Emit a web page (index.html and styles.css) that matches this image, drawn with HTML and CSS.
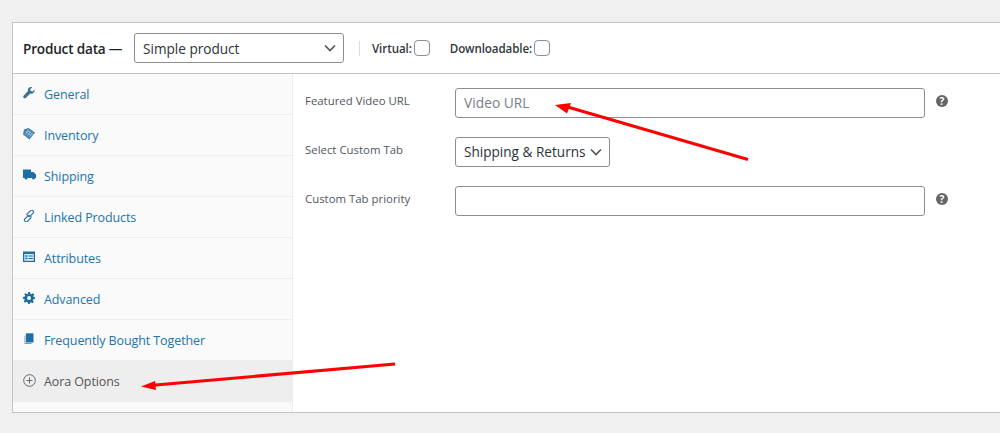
FILE: index.html
```html
<!DOCTYPE html>
<html>
<head>
<meta charset="utf-8">
<title>Product data</title>
<link rel="stylesheet" href="styles.css">
</head>
<body>
<div class="panel">
 <div class="head">
  <span class="head-title">Product data —</span>
  <div class="select type-select">
   <span>Simple product</span>
   <svg class="chev" width="12" height="8" viewBox="0 0 12 8"><path d="M1 1.500l5 5 5-5" fill="none" stroke="#50575e" stroke-width="1.700"/></svg>
  </div>
  <div class="head-sep"></div>
  <label class="check-label">Virtual:<span class="check"></span></label>
  <label class="check-label dl-label">Downloadable:<span class="check"></span></label>
 </div>
 <div class="body">
  <ul class="tabs">
   <li class="tab">
    <svg class="ico" viewBox="0 0 12 12"><path d="M11.600 2.600L9.600 4.600 7.700 4.100 7.200 2.200 9.200.3C7.800-.2 6.300.2 5.500 1.200 4.800 2 4.700 3.100 5 4.100L.6 8.800C.0 9.400.1 10.300.7 10.900 1.300 11.500 2.200 11.500 2.800 10.900L7.300 6.500C8.400 6.900 9.600 6.700 10.500 5.800 11.400 4.900 11.900 3.700 11.600 2.600Z" fill="#3c6f92"/></svg>
    <a>General</a>
   </li>
   <li class="tab">
    <svg class="ico" viewBox="0 0 12 12"><path d="M5.500 0L12 4.500 6.500 11.500 0 6.500 1 1.500Z" fill="#3c7fa8"/><path d="M2.500 3.500L8.500 8M4 2L10 6.500M5.500 1.500L2 7M7.500 3L4 8.500M9.500 4.500L6 9.500" stroke="#d5e4ee" stroke-width=".6" fill="none"/></svg>
    <a>Inventory</a>
   </li>
   <li class="tab">
    <svg class="ico truck" viewBox="0 0 13 12"><path d="M0 .5h8v2.500h2.500l2.500 2.500v3.500h-1a1.500 1.500 0 0 1-3 0H4.500a1.500 1.500 0 0 1-3 0H0Z" fill="#1e6fa5"/></svg>
    <a>Shipping</a>
   </li>
   <li class="tab">
    <svg class="ico" viewBox="0 0 12 12"><rect x="5.500" y="-.4" width="3.600" height="7.600" rx="1.800" transform="rotate(45 7.300 3.400)" fill="none" stroke="#3f7fae" stroke-width="1.200"/><rect x="2.900" y="4.800" width="3.600" height="7.600" rx="1.800" transform="rotate(45 4.700 8.600)" fill="none" stroke="#3f7fae" stroke-width="1.200"/></svg>
    <a>Linked Products</a>
   </li>
   <li class="tab">
    <svg class="ico" viewBox="0 0 12 12"><path d="M0 .5h12v10.500H0Z" fill="#1e6fa5"/><path d="M1.300 3h9.400v6.800H1.300Z" fill="#dfe9f1"/><path d="M2.300 4.200h2.200v1.500H2.300ZM2.300 6.800h2.200v1.500H2.300ZM5.500 4.500h4.300v1H5.500ZM5.500 7h4.300v1H5.500Z" fill="#1e6fa5"/></svg>
    <a>Attributes</a>
   </li>
   <li class="tab">
    <svg class="ico" viewBox="0 0 12 12"><path d="M5 0h2l.3 1.700 1.100.5L9.900 1.200l1.400 1.400-1 1.500.5 1.100L12 5v2l-1.700.3-.5 1.100 1 1.500-1.400 1.400-1.500-1-1.100.5L7 12H5l-.3-1.700-1.100-.5-1.500 1L.7 9.400l1-1.500-.5-1.100L0 7V5l1.700-.3.500-1.100-1-1.500L2.600 1.200l1.500 1 1.100-.5Z" fill="#1b6a9c"/><circle cx="6" cy="6" r="2" fill="#fafafa"/></svg>
    <a>Advanced</a>
   </li>
   <li class="tab">
    <svg class="ico" viewBox="0 0 12 12"><path d="M1.500 2.500h1v7.500h6v1h-7Z" fill="#6f9fc0"/><path d="M3 .3h7.500v9.200H3Z" fill="#1e6fa5"/></svg>
    <a>Frequently Bought Together</a>
   </li>
   <li class="tab tab-on">
    <svg class="ico plus" viewBox="0 0 13 13"><circle cx="6.500" cy="6.500" r="5.800" fill="none" stroke="#646970"/><path d="M6.500 3.500v6M3.500 6.500h6" stroke="#646970" fill="none"/></svg>
    <a>Aora Options</a>
   </li>
  </ul>
  <div class="fields">
   <div class="row">
    <label class="row-label">Featured Video URL</label>
    <input class="txt" type="text" placeholder="Video URL">
    <span class="help">?</span>
   </div>
   <div class="row">
    <label class="row-label">Select Custom Tab</label>
    <div class="select tab-select">
     <span>Shipping &amp; Returns</span>
     <svg class="chev" width="12" height="8" viewBox="0 0 12 8"><path d="M1 1.500l5 5 5-5" fill="none" stroke="#50575e" stroke-width="1.700"/></svg>
    </div>
   </div>
   <div class="row">
    <label class="row-label">Custom Tab priority</label>
    <input class="txt" type="text">
    <span class="help">?</span>
   </div>
  </div>
 </div>
</div>
<svg class="arrows" width="1000" height="433" viewBox="0 0 1000 433">
 <path d="M748 159.500L566 106.500" stroke="#f00" stroke-width="3" fill="none"/>
 <path d="M555 105L571 103 567 113.500Z" fill="#f00"/>
 <path d="M395 364L150 385.500" stroke="#f00" stroke-width="3" fill="none"/>
 <path d="M141 386.500L155 381 156 390Z" fill="#f00"/>
</svg>
</body>
</html>
```

FILE: styles.css
```css
body {
 margin: 0;
 height: 433px;
 overflow: hidden;
 background: #f0f0f1;
 font-family: "Open Sans", "Noto Sans", sans-serif;
 font-size: 13px;
 color: #3c434a;
}
.panel {
 margin: 22px 0 0 12px;
 height: 389px;
 background: #fff;
 border: 1px solid #c3c4c7;
 border-right: 0;
 display: flex;
 flex-direction: column;
}
.head {
 height: 50px;
 flex: none;
 display: flex;
 align-items: center;
 border-bottom: 1px solid #c3c4c7;
 padding-left: 10px;
}
.head-title {
 width: 111px;
 flex: none;
 font-size: 13.600px;
 font-weight: 600;
 color: #1d2327;
 letter-spacing: -0.2px;
}
.select {
 display: flex;
 align-items: center;
 justify-content: space-between;
 box-sizing: border-box;
 height: 30px;
 border: 1px solid #8c8f94;
 border-radius: 3px;
 font-size: 13.600px;
 color: #2c3338;
 background: #fff;
 padding: 0 7px 0 8px;
}
.type-select {
 width: 210px;
 font-weight: 500;
}
.tab-select {
 width: 155px;
 padding-bottom: 1px;
}
.head-sep {
 width: 1px;
 height: 15px;
 background: #dcdcde;
 margin: 0 12px 0 15px;
}
.check-label {
 display: flex;
 align-items: center;
 gap: 2px;
 font-size: 11.600px;
 font-weight: 600;
 color: #32373c;
 letter-spacing: -0.1px;
}
.dl-label {
 margin-left: 20px;
}
.check {
 display: block;
 width: 14px;
 height: 14px;
 border: 1px solid #8c8f94;
 border-radius: 4px;
 background: #fff;
}
.body {
 flex: 1;
 display: flex;
}
.tabs {
 list-style: none;
 margin: 0;
 padding: 0;
 width: 279px;
 flex: none;
 background: #fafafa;
 border-right: 1px solid #eee;
}
.tab {
 box-sizing: border-box;
 height: 41px;
 display: flex;
 align-items: center;
 padding-left: 10px;
 border-bottom: 1px solid #eee;
}
.tab a {
 margin-left: 9px;
 color: #1c74ab;
 font-size: 12.500px;
 letter-spacing: -0.1px;
}
.ico {
 width: 12px;
 height: 12px;
 flex: none;
 margin-top: -3px;
}
.truck {
 width: 13px;
 margin-right: -1px;
}
.tab-on {
 background: #eee;
 border-bottom: 0;
}
.tab-on a {
 color: #555;
}
.plus {
 width: 13px;
 height: 13px;
 margin-right: -1px;
}
.fields {
 flex: 1;
 padding-top: 14px;
}
.row {
 display: flex;
 align-items: flex-start;
 height: 49px;
}
.row-label {
 width: 150px;
 flex: none;
 margin-left: 12px;
 padding-top: 5px;
 font-size: 11.400px;
 color: #50575e;
}
.txt {
 box-sizing: border-box;
 width: 470px;
 height: 30px;
 border: 1px solid #8c8f94;
 border-radius: 3px;
 padding: 0 8px 2px;
 font-family: inherit;
 font-size: 13.800px;
 color: #2c3338;
 outline: 0;
}
.txt::placeholder {
 color: #7a8086;
}
.help {
 width: 12px;
 height: 12px;
 margin: 7px 0 0 11px;
 border-radius: 50%;
 background: #666;
 color: #fff;
 font-size: 10px;
 font-weight: 700;
 line-height: 12px;
 text-align: center;
}
.arrows {
 position: absolute;
 left: 0;
 top: 0;
 pointer-events: none;
}
```
